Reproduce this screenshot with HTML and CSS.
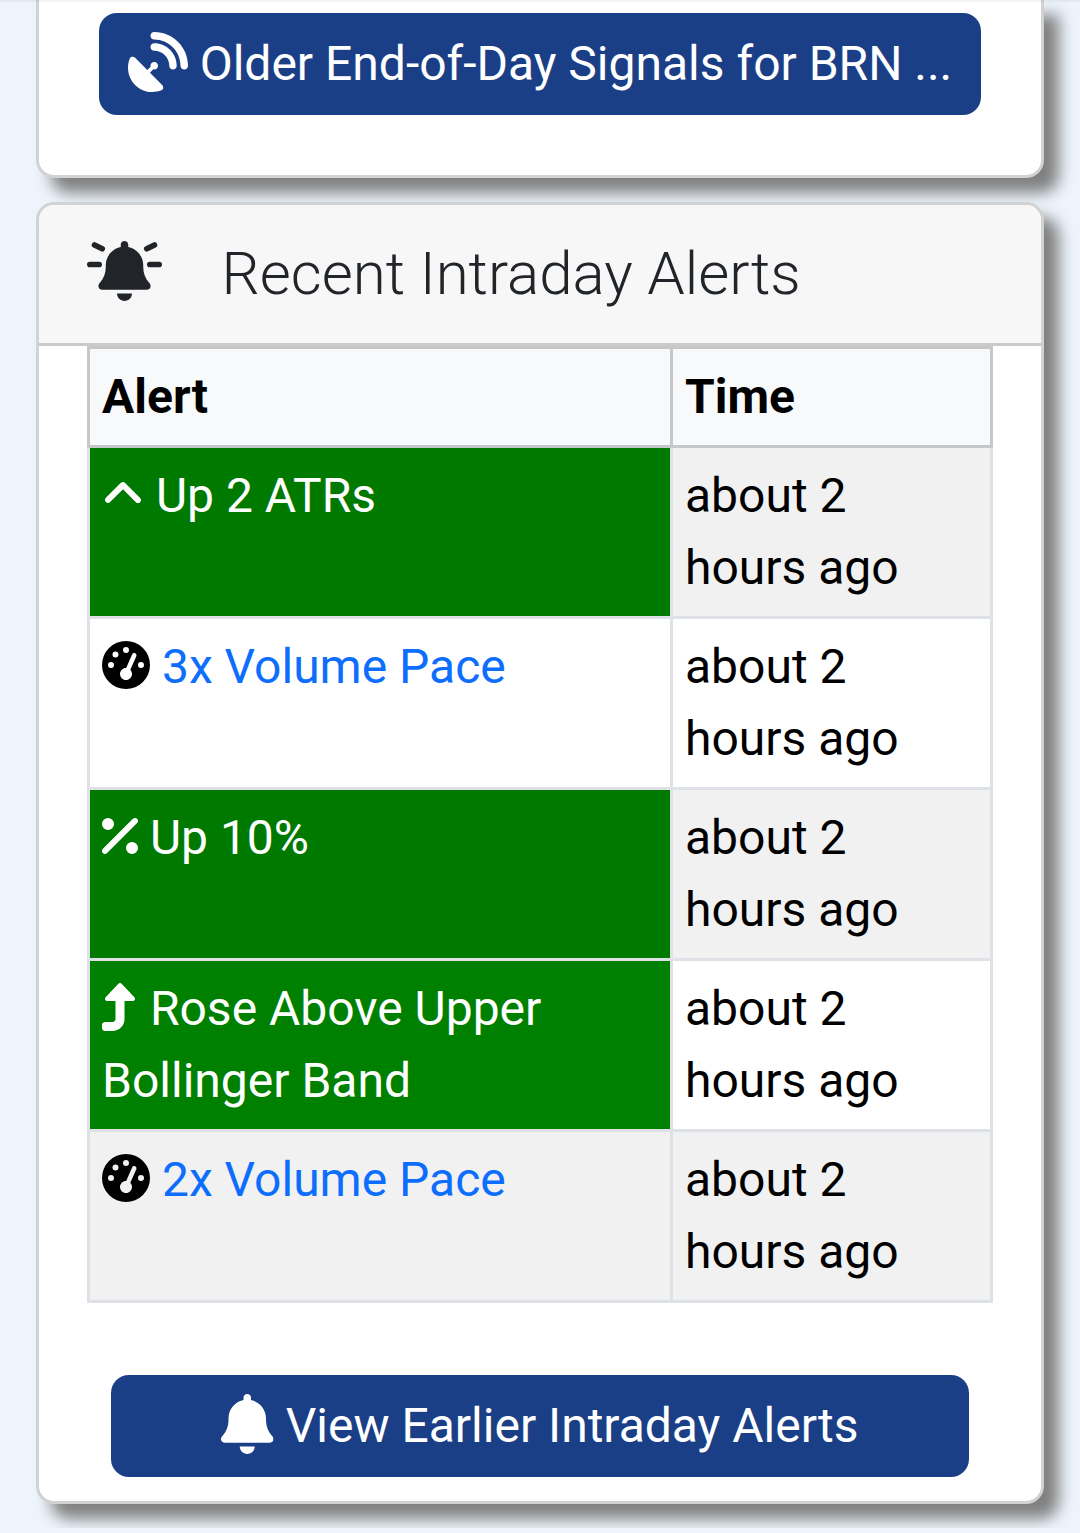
FILE: index.html
```html
<!DOCTYPE html>
<html lang="en">
<head>
  <meta charset="utf-8">
  <meta name="viewport" content="width=device-width, initial-scale=1">
  <title>Recent Intraday Alerts</title>
  <link rel="stylesheet" href="styles.css">
</head>
<body>
  <svg class="sprite" aria-hidden="true">
    <symbol id="dish" viewBox="0 0 512 512"><path d="M192 32c0-17.7 14.3-32 32-32C383.1 0 512 128.9 512 288c0 17.7-14.3 32-32 32s-32-14.3-32-32C448 164.3 347.7 64 224 64c-17.7 0-32-14.3-32-32zM60.6 220.6L164.7 324.7l28.4-28.4c-.7-2.6-1.1-5.4-1.1-8.3c0-17.7 14.3-32 32-32s32 14.3 32 32s-14.3 32-32 32c-2.9 0-5.6-.4-8.3-1.1l-28.4 28.4L291.4 451.4c14.5 14.5 11.8 38.8-7.3 46.3C260.5 506.9 234.9 512 208 512C93.1 512 0 418.9 0 304c0-26.9 5.1-52.5 14.4-76.1c7.5-19 31.8-21.8 46.3-7.3zM224 96c106 0 192 86 192 192c0 17.7-14.3 32-32 32s-32-14.3-32-32c0-70.7-57.3-128-128-128c-17.7 0-32-14.3-32-32s14.3-32 32-32z"/></symbol>
    <symbol id="bell" viewBox="0 0 448 512"><path d="M224 0c-17.7 0-32 14.3-32 32V51.2C119 66 64 130.6 64 208v18.8c0 47-17.3 92.4-48.5 127.6l-7.4 8.3c-8.4 9.4-10.4 22.9-5.3 34.4S19.4 416 32 416H416c12.6 0 24-7.4 29.2-18.9s3.1-25-5.3-34.4l-7.4-8.3C401.3 319.2 384 273.9 384 226.8V208c0-77.4-55-142-128-156.8V32c0-17.7-14.3-32-32-32zm45.3 493.3c12-12 18.7-28.3 18.7-45.3H224 160c0 17 6.7 33.3 18.7 45.3s28.3 18.7 45.3 18.7s33.3-6.7 45.3-18.7z"/></symbol>
    <symbol id="bell-on" viewBox="0 0 640 512">
      <use href="#bell" x="96" y="0" width="448" height="512"/>
      <path d="M24 200H104M536 200H616M64 34L130 67M576 34L510 67" fill="none" stroke="currentColor" stroke-width="48" stroke-linecap="round"/>
    </symbol>
    <symbol id="angle-up" viewBox="0 0 448 512"><path d="M201.4 137.4c12.5-12.5 32.8-12.5 45.3 0l160 160c12.5 12.5 12.5 32.8 0 45.3s-32.8 12.5-45.3 0L224 205.3 86.6 342.6c-12.5 12.5-32.8 12.5-45.3 0s-12.5-32.8 0-45.3l160-160z"/></symbol>
    <symbol id="gauge" viewBox="0 0 512 512"><path fill-rule="evenodd" d="M0 256a256 256 0 1 1 512 0A256 256 0 1 1 0 256zM288 96a32 32 0 1 0 -64 0 32 32 0 1 0 64 0zM256 416c35.3 0 64-28.7 64-64c0-17.4-6.9-33.1-18.1-44.6L366 161.7c5.3-12.1-.2-26.3-12.3-31.6s-26.3 .2-31.6 12.3L257.9 288c-.6 0-1.3 0-1.9 0c-35.3 0-64 28.7-64 64s28.7 64 64 64zM176 144a32 32 0 1 0 -64 0 32 32 0 1 0 64 0zM96 288a32 32 0 1 0 0-64 32 32 0 1 0 0 64zm352-32a32 32 0 1 0 -64 0 32 32 0 1 0 64 0z"/></symbol>
    <symbol id="percent" viewBox="0 0 384 512"><path d="M374.6 118.6c12.5-12.5 12.5-32.8 0-45.3s-32.8-12.5-45.3 0l-320 320c-12.5 12.5-12.5 32.8 0 45.3s32.8 12.5 45.3 0l320-320zM128 128A64 64 0 1 0 0 128a64 64 0 1 0 128 0zM384 384a64 64 0 1 0 -128 0 64 64 0 1 0 128 0z"/></symbol>
    <symbol id="turn-up" viewBox="0 0 384 512"><path d="M350 177.5c3.8-8.8 2-19-4.6-26l-136-144C204.9 2.7 198.6 0 192 0s-12.9 2.7-17.4 7.5l-136 144c-6.6 7-8.4 17.2-4.6 26s12.5 14.5 22 14.5h88l0 192c0 17.7-14.3 32-32 32H32c-17.7 0-32 14.3-32 32v32c0 17.7 14.3 32 32 32l80 0c70.7 0 128-57.3 128-128l0-192h88c9.6 0 18.2-5.7 22-14.5z"/></symbol>
  </svg>

  <div class="navbar-shadow"></div>

  <main class="container">
    <section class="card card-signals">
      <a class="btn" href="#"><svg class="icon icon-lg" viewBox="0 0 512 512"><use href="#dish"/></svg> Older End-of-Day Signals for BRN ...</a>
    </section>

    <section class="card">
      <h2 class="card-header"><svg class="icon icon-title" viewBox="0 0 640 512"><use href="#bell-on"/></svg> Recent Intraday Alerts</h2>
      <div class="card-body">
        <table class="table">
          <thead>
            <tr>
              <th>Alert</th>
              <th class="time">Time</th>
            </tr>
          </thead>
          <tbody>
            <tr>
              <td class="bullish"><svg class="icon" viewBox="0 0 448 512"><use href="#angle-up"/></svg> <a href="#">Up 2 ATRs</a></td>
              <td>about 2 hours ago</td>
            </tr>
            <tr>
              <td><svg class="icon" viewBox="0 0 512 512"><use href="#gauge"/></svg> <a href="#">3x Volume Pace</a></td>
              <td>about 2 hours ago</td>
            </tr>
            <tr>
              <td class="bullish"><svg class="icon" viewBox="0 0 384 512"><use href="#percent"/></svg> <a href="#">Up 10%</a></td>
              <td>about 2 hours ago</td>
            </tr>
            <tr>
              <td class="bullish"><svg class="icon" viewBox="0 0 384 512"><use href="#turn-up"/></svg> <a href="#">Rose Above Upper Bollinger Band</a></td>
              <td>about 2 hours ago</td>
            </tr>
            <tr>
              <td><svg class="icon" viewBox="0 0 512 512"><use href="#gauge"/></svg> <a href="#">2x Volume Pace</a></td>
              <td>about 2 hours ago</td>
            </tr>
          </tbody>
        </table>
        <a class="btn btn-earlier" href="#"><svg class="icon icon-lg" viewBox="0 0 448 512"><use href="#bell"/></svg> View Earlier Intraday Alerts</a>
      </div>
    </section>
  </main>
</body>
</html>
```

FILE: styles.css
```css
* {
  box-sizing: border-box;
}

body {
  margin: 0;
  background-color: #edf4fc;
  color: #212529;
  font-family: Roboto, "Liberation Sans", sans-serif;
  font-size: 48px;
  line-height: 72px;
}

a {
  color: #0d6efd;
  text-decoration: none;
}

.sprite {
  display: none;
}

/* bottom edge of the sticky navbar */
.navbar-shadow {
  position: fixed;
  top: 0;
  left: 0;
  right: 0;
  height: 0;
  box-shadow: 0 0 3px 1px rgba(0, 0, 0, 0.1);
}

.container {
  display: flex;
  flex-direction: column;
  gap: 24px;
  padding: 0 36px 24px;
}

.card {
  background-color: #fff;
  border: 3px solid #d2d2d2;
  border-radius: 18px;
  box-shadow: 15px 15px 15px #808080;
}

.card-signals {
  padding: 13px 60px 60px;
  border-top: 0;
  border-radius: 0 0 18px 18px;
}

.card-header {
  margin: 0;
  padding: 24px 48px;
  background-color: #f7f7f7;
  border-bottom: 3px solid #cbcbcb;
  border-radius: 15px 15px 0 0;
  font-size: 60px;
  font-weight: 300;
  line-height: 90px;
}

.card-body {
  padding: 0 48px 24px;
}

.icon {
  height: 48px;
  fill: currentColor;
  vertical-align: -6px;
}

.icon-lg {
  height: 60px;
  vertical-align: -12px;
}

.icon-title {
  height: 60px;
  margin-right: 45px;
  vertical-align: -7px;
}

.btn {
  display: block;
  padding: 15px;
  background-color: #1b3f87;
  border-radius: 18px;
  color: #fff;
  text-align: center;
}

.btn-earlier {
  margin: 72px 24px 0;
}

.table {
  width: 100%;
  border-collapse: collapse;
  table-layout: fixed;
  color: #000;
}

.table th,
.table td {
  padding: 12px;
  border: 3px solid #dee2e6;
  text-align: left;
  vertical-align: top;
}

.table th {
  background-color: #f8f9fb;
  border-color: #c6c7c8;
}

.table .time {
  width: 320px;
}

.table tbody tr:nth-child(odd) td {
  background-color: #f1f1f1;
}

.table tbody .bullish {
  background-color: #008000;
  color: #fff;
}

.table tbody tr:nth-child(odd) .bullish {
  background-color: #007900;
}

.bullish a {
  color: #fff;
}
```
